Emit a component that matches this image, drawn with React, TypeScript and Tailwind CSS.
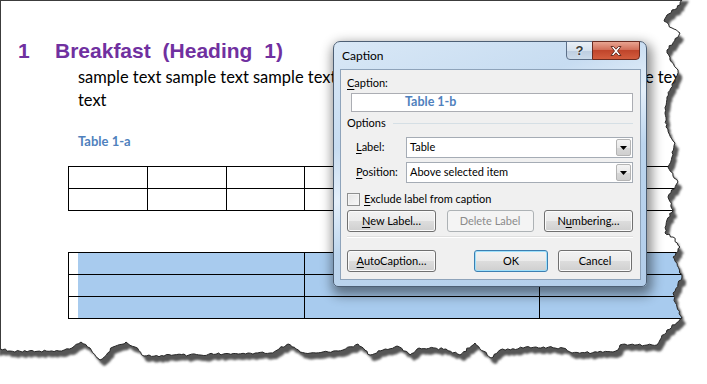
import clsx from "clsx";
import type { ReactNode } from "react";

// torn paper edge, traced from the screenshot (x, y)
const edge: [number, number][] = [
    [682, 0], [680, 5], [667, 15], [664, 21], [672, 28], [680, 33], [667, 50],
    [670, 60], [678, 70], [675, 80], [667, 97], [665, 113], [666, 127],
    [675, 143], [672, 157], [668, 167], [678, 182], [668, 197], [673, 210],
    [667, 220], [665, 233], [673, 237], [680, 247], [673, 257], [682, 277],
    [673, 293], [677, 307], [682, 318], [667, 330], [660, 340], [657, 345],
    [620, 345], [618, 350], [613, 352], [572, 353], [563, 348], [536, 347],
    [500, 350], [491, 358], [475, 343], [460, 355], [446, 349], [419, 348],
    [410, 355], [397, 346], [383, 350], [370, 355], [358, 344], [343, 350],
    [316, 353], [300, 352], [288, 344], [270, 353], [248, 353], [189, 355],
    [144, 356], [135, 347], [126, 342], [113, 347], [100, 360], [90, 348],
    [81, 342], [72, 348], [59, 351], [10, 351], [0, 349],
];

function jagged(points: [number, number][]) {
    let s = 17;
    const rnd = () => {
        s = (s * 9301 + 49297) % 233280;
        return s / 233280 - 0.5;
    };
    const out: string[] = [];
    points.forEach(([x, y], i) => {
        if (i === 0) {
            out.push(`M${x} ${y}`);
            return;
        }
        const [px, py] = points[i - 1];
        const len = Math.hypot(x - px, y - py);
        const n = Math.max(1, Math.round(len / 2.5));
        const nx = -(y - py) / len;
        const ny = (x - px) / len;
        for (let k = 1; k <= n; k++) {
            const t = k / n;
            const j = k === n ? 0 : rnd() * 2.2;
            out.push(
                `L${(px + (x - px) * t + nx * j).toFixed(1)} ${(py + (y - py) * t + ny * j).toFixed(1)}`,
            );
        }
    });
    return out.join("");
}

const edgePath = jagged(edge);
const pagePath = `M-5 -5L685 -5${edgePath.replace(/^M/, "L")}L-5 350Z`;
const outsidePath = `M-20 -20H730V410H-20Z${pagePath}`;

function TornEdge() {
    return (
        <svg
            className="absolute inset-0 pointer-events-none"
            width={707}
            height={384}
            viewBox="0 0 707 384"
        >
            <defs>
                <clipPath id="outside">
                    <path d={outsidePath} clipRule="evenodd" />
                </clipPath>
                <filter id="soft" x="-5%" y="-5%" width="110%" height="110%">
                    <feGaussianBlur stdDeviation="1.3" />
                </filter>
            </defs>
            <path d={outsidePath} fill="#fff" fillRule="evenodd" />
            <g clipPath="url(#outside)">
                <path
                    d={pagePath}
                    transform="translate(4 6)"
                    fill="#575757"
                    filter="url(#soft)"
                />
            </g>
            <path d={edgePath} fill="none" stroke="#262626" strokeWidth={1} />
        </svg>
    );
}

function U({ children }: { children: ReactNode }) {
    return <span className="underline underline-offset-[2px]">{children}</span>;
}

function WinButton({
    children,
    className,
    disabled,
    isDefault,
}: {
    children: ReactNode;
    className?: string;
    disabled?: boolean;
    isDefault?: boolean;
}) {
    return (
        <div
            className={clsx(
                "h-[22px] flex items-center justify-center rounded-[3px] border",
                disabled
                    ? "border-[#adb2b5] bg-[#f4f4f4] text-[#8b8b8b]"
                    : isDefault
                      ? "border-[#3c7fb1] bg-[linear-gradient(to_bottom,#f2f2f2_0%,#ebebeb_49%,#dddddd_50%,#cfcfcf_100%)] shadow-[inset_0_0_0_1px_#9ee0fb]"
                      : "border-[#707070] bg-[linear-gradient(to_bottom,#f2f2f2_0%,#ebebeb_49%,#dddddd_50%,#cfcfcf_100%)] shadow-[inset_0_0_0_1px_#fbfbfb]",
                className,
            )}
        >
            {children}
        </div>
    );
}

function Select({ value }: { value: string }) {
    return (
        <div className="w-[227px] h-[21px] flex items-center border border-[#a5acb5] bg-white pl-[3px] pr-px">
            <span className="flex-1">{value}</span>
            <div className="w-[15px] h-[17px] flex items-center justify-center rounded-[2px] border border-[#b4b4b4] bg-[linear-gradient(to_bottom,#f4f4f4_0%,#e8e8e8_50%,#d8d8d8_51%,#cfcfcf_100%)]">
                <svg width="7" height="4" viewBox="0 0 7 4">
                    <path d="M0 0H7L3.5 4Z" fill="#000" />
                </svg>
            </div>
        </div>
    );
}

function CaptionDialog() {
    return (
        <div className="absolute left-[333px] top-[41px] w-[314px] h-[246px] flex flex-col rounded-t-[7px] rounded-b-[5px] border border-[#4d5f74] bg-[linear-gradient(160deg,#d9e8f6_0%,#c7dcf1_30%,#e4effa_45%,#bcd5ee_60%,#b2cdea_100%)] pl-[6px] pr-[5px] pb-[6px] shadow-[2px_5px_12px_3px_rgba(0,0,0,0.45)] font-['Lato',sans-serif] text-[11px] text-black">
            <div className="h-[27px] flex items-start justify-between">
                <span className="mt-[6px] pl-[2px] text-[12px] leading-4 text-black">
                    Caption
                </span>
                <div className="-mt-px mr-px flex h-[19px]">
                    <div className="w-[27px] flex items-center justify-center rounded-bl-[4px] border border-[#5d7089] bg-[linear-gradient(to_bottom,#e9f0f7_0%,#d6e2ee_50%,#bdcde0_51%,#ccdbea_100%)]">
                        <span className="font-['Liberation_Sans',sans-serif] text-[13px] font-bold leading-none text-[#3b3b3b] [text-shadow:0_0_2px_#fff]">
                            ?
                        </span>
                    </div>
                    <div className="w-[48px] -ml-px flex items-center justify-center rounded-br-[4px] border border-[#6a2b20] bg-[linear-gradient(to_bottom,#e8a491_0%,#d2705a_45%,#c0452b_50%,#d35d3e_100%)]">
                        <svg width="14" height="12" viewBox="0 0 14 12">
                            <path
                                d="M2 1.5L4.5 1.5L7 4.2L9.5 1.5L12 1.5L8.5 6L12 10.5L9.5 10.5L7 7.8L4.5 10.5L2 10.5L5.5 6Z"
                                fill="#fff"
                                stroke="#5a2418"
                                strokeWidth="0.9"
                                strokeLinejoin="round"
                            />
                        </svg>
                    </div>
                </div>
            </div>
            <div className="flex-1 flex flex-col border border-[#8ea3ba] bg-[#f0f0f0] pl-[6px] pr-[7px]">
                <div className="mt-[5px] leading-4">
                    <U>C</U>aption:
                </div>
                <div className="mt-[2px] ml-[4px] h-[19px] flex items-center border border-[#abadb3] bg-white pl-[53px]">
                    <span className="font-['Lato',sans-serif] text-[12.5px] font-bold text-[#4f81bd]">
                        Table 1-b
                    </span>
                </div>
                <div className="mt-[3px] flex items-center leading-4">
                    <span>Options</span>
                    <div className="ml-[7px] h-px flex-1 bg-[#d5dfe5]" />
                </div>
                <div className="mt-[6px] flex items-center justify-between">
                    <span className="ml-[9px]">
                        <U>L</U>abel:
                    </span>
                    <Select value="Table" />
                </div>
                <div className="mt-[4px] flex items-center justify-between">
                    <span className="ml-[9px]">
                        <U>P</U>osition:
                    </span>
                    <Select value="Above selected item" />
                </div>
                <div className="mt-[10px] flex items-center h-[13px]">
                    <div className="size-[13px] border border-[#8e8f8f] bg-[linear-gradient(135deg,#e4e4e4,#f8f8f8)] shadow-[inset_0_0_0_1px_#f4f4f4]" />
                    <span className="ml-[4px]">
                        <U>E</U>xclude label from caption
                    </span>
                </div>
                <div className="mt-[4px] flex justify-between">
                    <WinButton className="w-[89px]">
                        <span>
                            <U>N</U>ew Label…
                        </span>
                    </WinButton>
                    <WinButton className="w-[87px]" disabled>
                        Delete Label
                    </WinButton>
                    <WinButton className="w-[89px]">
                        <span>
                            N<U>u</U>mbering…
                        </span>
                    </WinButton>
                </div>
                <div className="mt-[4px] h-px bg-[#dfdfdf] border-b border-white box-content" />
                <div className="mt-[12px] flex">
                    <WinButton className="w-[89px]">
                        <span>
                            <U>A</U>utoCaption…
                        </span>
                    </WinButton>
                    <WinButton className="w-[74px] ml-[38px]" isDefault>
                        OK
                    </WinButton>
                    <WinButton className="w-[74px] ml-[10px]">Cancel</WinButton>
                </div>
            </div>
        </div>
    );
}

const t1Cols = [79, 79, 78, 79, 79, 78, 79, 79, 78];

export default function App() {
    return (
        <div className="relative w-[707px] h-[384px] overflow-hidden bg-white">
            <div className="h-[384px] border-l border-t border-[#3c3c3c]">
                <h1 className="mt-[38px] pl-[17px] font-['Liberation_Sans',Arial,sans-serif] text-[21px] leading-6 font-bold text-[#7030a0] whitespace-nowrap [word-spacing:6px]">
                    <span className="inline-block w-[37px]">1</span>
                    Breakfast (Heading 1)
                </h1>
                <div className="mt-[3px] pl-[77px] font-['Lato',sans-serif] text-[16.45px] leading-[23px] text-black whitespace-nowrap">
                    <div>
                        sample text sample text sample text sample text sample
                        text sample text sample text
                    </div>
                    <div>text</div>
                </div>
                <div className="mt-[21px] pl-[77px] font-['Lato',sans-serif] text-[13px] leading-4 font-bold text-[#4f81bd]">
                    Table 1-a
                </div>
                <div className="mt-[17px] ml-[67px] flex w-max border-l border-t border-black">
                    {t1Cols.map((w, i) => (
                        <div key={i} style={{ width: w }}>
                            <div className="h-[22px] border-r border-b border-black" />
                            <div className="h-[22px] border-r border-b border-black" />
                        </div>
                    ))}
                </div>
                <div className="mt-[41px] ml-[67px] w-max border-l border-t border-black">
                    {[0, 1, 2].map((r) => (
                        <div key={r} className="flex">
                            <div className="w-[236px] h-[22px] border-r border-b border-black pl-[9px] bg-[#a8cbee] bg-clip-content" />
                            <div className="w-[235px] h-[22px] border-r border-b border-black bg-[#a8cbee]" />
                            <div className="w-[236px] h-[22px] border-r border-b border-black bg-[#a8cbee]" />
                        </div>
                    ))}
                </div>
            </div>
            <TornEdge />
            <CaptionDialog />
        </div>
    );
}
